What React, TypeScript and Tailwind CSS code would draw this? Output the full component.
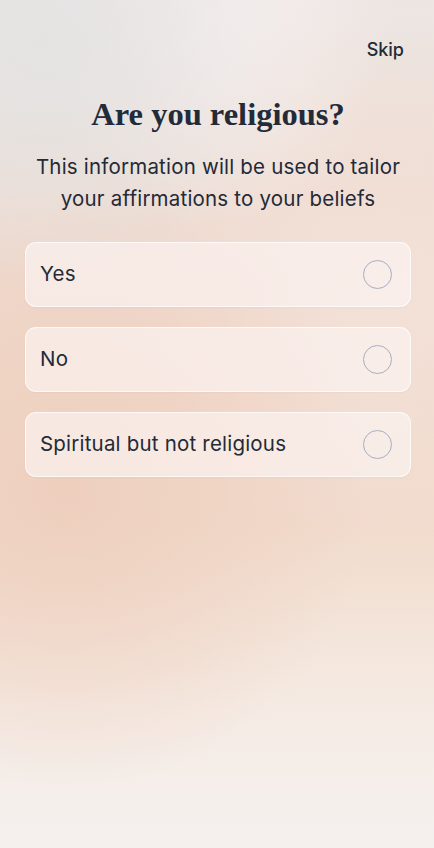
import React from "react";

const options = ["Yes", "No", "Spiritual but not religious"];

export default function App() {
  return (
    <div
      className="relative w-[434px] h-[848px] overflow-hidden bg-[#f1e6e0] bg-[radial-gradient(ellipse_60%_30%_at_10%_5%,#e4e3e3_0%,transparent_100%),radial-gradient(ellipse_40%_25%_at_50%_2%,#f6efee_0%,transparent_100%),radial-gradient(ellipse_70%_35%_at_15%_58%,#eecfbe_0%,transparent_100%),radial-gradient(ellipse_60%_30%_at_90%_35%,#f3e1d8_0%,transparent_100%),linear-gradient(180deg,#ece6e3_0%,#efd8cb_33%,#f1dbcc_62%,#f5ebe4_84%,#f4f0ee_100%)]"
      style={{ fontFamily: "Inter, 'Noto Sans', sans-serif" }}
    >
      <div className="flex flex-col pl-[25px] pr-[23px]">
        <div className="flex justify-end pt-[38px] pr-[7px]">
          <span className="text-[18px] leading-[24px] text-[#232a38] font-medium">Skip</span>
        </div>
        <h1
          className="mt-[32px] text-center text-[32.5px] leading-[40px] font-bold text-[#232a38]"
          style={{ fontFamily: "'Liberation Serif', 'DejaVu Serif', serif" }}
        >
          Are you religious?
        </h1>
        <p className="mt-[17px] text-center text-[20.5px] leading-[32px] tracking-[0.2px] text-[#232a38]">
          This information will be used to tailor
          <br />
          your affirmations to your beliefs
        </p>
        <div className="mt-[27px] flex flex-col gap-[20px]">
          {options.map((o) => (
            <div
              key={o}
              className="h-[65px] flex items-center justify-between pl-[14px] pr-[18px] rounded-[11px] bg-[#fcf5f2]/65 border border-white/70 shadow-[0_1px_2px_rgba(0,0,0,0.03)]"
            >
              <span className="text-[20.5px] tracking-[0.2px] text-[#232a38]">{o}</span>
              <span className="w-[29px] h-[29px] rounded-full border-[1.6px] border-[#a7aebf]" />
            </div>
          ))}
        </div>
      </div>
    </div>
  );
}
